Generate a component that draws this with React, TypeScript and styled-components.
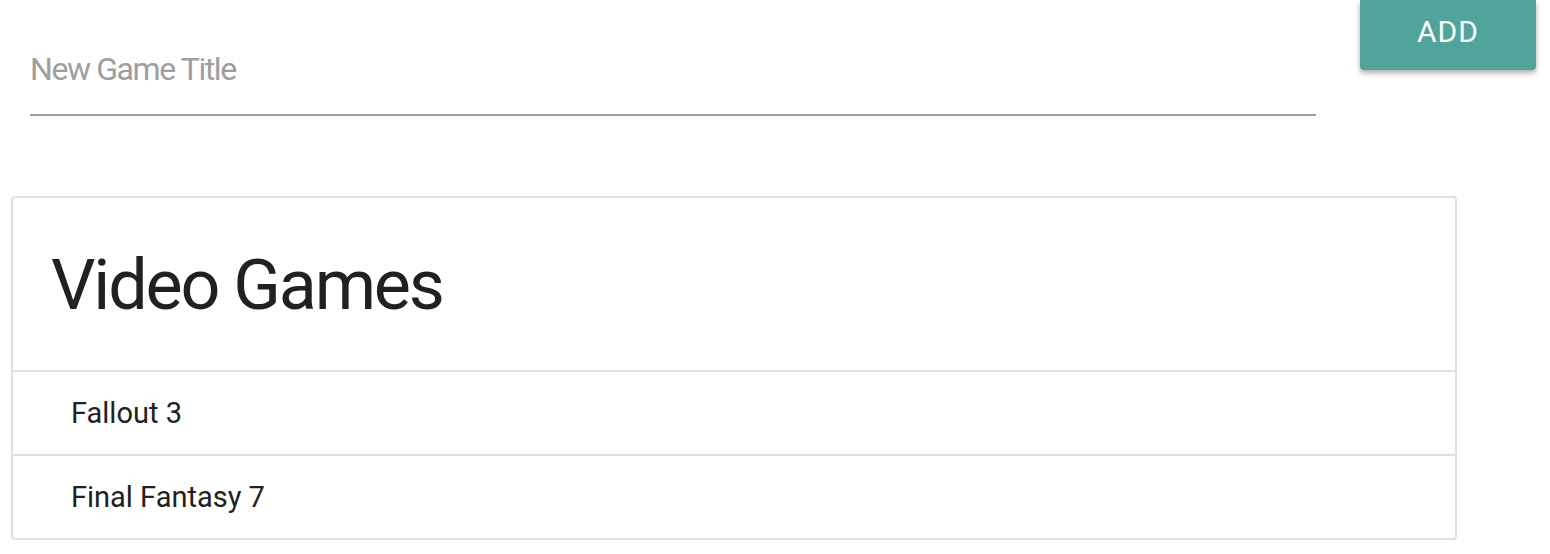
import { useState } from "react";
import styled, { createGlobalStyle } from "styled-components";

const GlobalStyle = createGlobalStyle`
  html, body {
    margin: 0;
    padding: 0;
    background: #fff;
    font-family: Roboto, "Liberation Sans", sans-serif;
    color: rgba(0, 0, 0, 0.87);
  }
  * {
    box-sizing: border-box;
  }
`;

const Page = styled.div`
  width: 1550px;
`;

const AddRow = styled.div`
  display: flex;
  align-items: flex-start;
  gap: 44px;
  padding: 0 14px 0 30px;
`;

const TitleInput = styled.input`
  flex: 1;
  box-sizing: content-box;
  margin: 24px 0 0;
  height: 90px;
  padding: 0;
  border: none;
  border-bottom: 2px solid #9e9e9e;
  outline: none;
  background: transparent;
  font-family: Roboto, "Liberation Sans", sans-serif;
  font-size: 32px;
  letter-spacing: -1.4px;
  color: rgba(0, 0, 0, 0.87);
  &::placeholder {
    color: #9e9e9e;
  }
`;

const AddButton = styled.button`
  width: 176px;
  height: 70px;
  padding: 0 0 8px;
  border: none;
  border-radius: 0 0 4px 4px;
  background: #51a499;
  color: #fff;
  font-family: Roboto, "Liberation Sans", sans-serif;
  font-size: 30px;
  letter-spacing: 1px;
  text-transform: uppercase;
  box-shadow: 0 4px 4px 0 rgba(0, 0, 0, 0.14), 0 2px 2px -2px rgba(0, 0, 0, 0.12),
    0 2px 6px 0 rgba(0, 0, 0, 0.2);
  cursor: pointer;
`;

const Collection = styled.ul`
  list-style: none;
  margin: 80px 0 0 11px;
  padding: 0;
  width: 1446px;
  border: 2px solid #e0e0e0;
  border-radius: 4px;
`;

const CollectionHeader = styled.li`
  padding: 49px 38px 46px;
  border-bottom: 2px solid #e0e0e0;
`;

const Heading = styled.h4`
  margin: 0;
  font-size: 70px;
  font-weight: 400;
  line-height: 77px;
  letter-spacing: -2.2px;
  color: #212121;
`;

const GameItem = styled.li<{ $last?: boolean }>`
  display: flex;
  align-items: center;
  height: ${({ $last }) => ($last ? "82px" : "84px")};
  padding-left: 58px;
  border-bottom: ${({ $last }) => ($last ? "none" : "2px solid #e0e0e0")};
  font-size: 29px;
  color: #212121;
`;

const App = () => {
  const [title, setTitle] = useState("");
  const [games, setGames] = useState<string[]>(["Fallout 3", "Final Fantasy 7"]);

  const addGame = () => {
    if (!title.trim()) return;
    setGames([...games, title.trim()]);
    setTitle("");
  };

  return (
    <Page>
      <GlobalStyle />
      <AddRow>
        <TitleInput
          placeholder="New Game Title"
          value={title}
          onChange={(e) => setTitle(e.target.value)}
        />
        <AddButton onClick={addGame}>Add</AddButton>
      </AddRow>
      <Collection>
        <CollectionHeader>
          <Heading>Video Games</Heading>
        </CollectionHeader>
        {games.map((game, i) => (
          <GameItem key={game + i} $last={i === games.length - 1}>
            {game}
          </GameItem>
        ))}
      </Collection>
    </Page>
  );
};

export default App;
